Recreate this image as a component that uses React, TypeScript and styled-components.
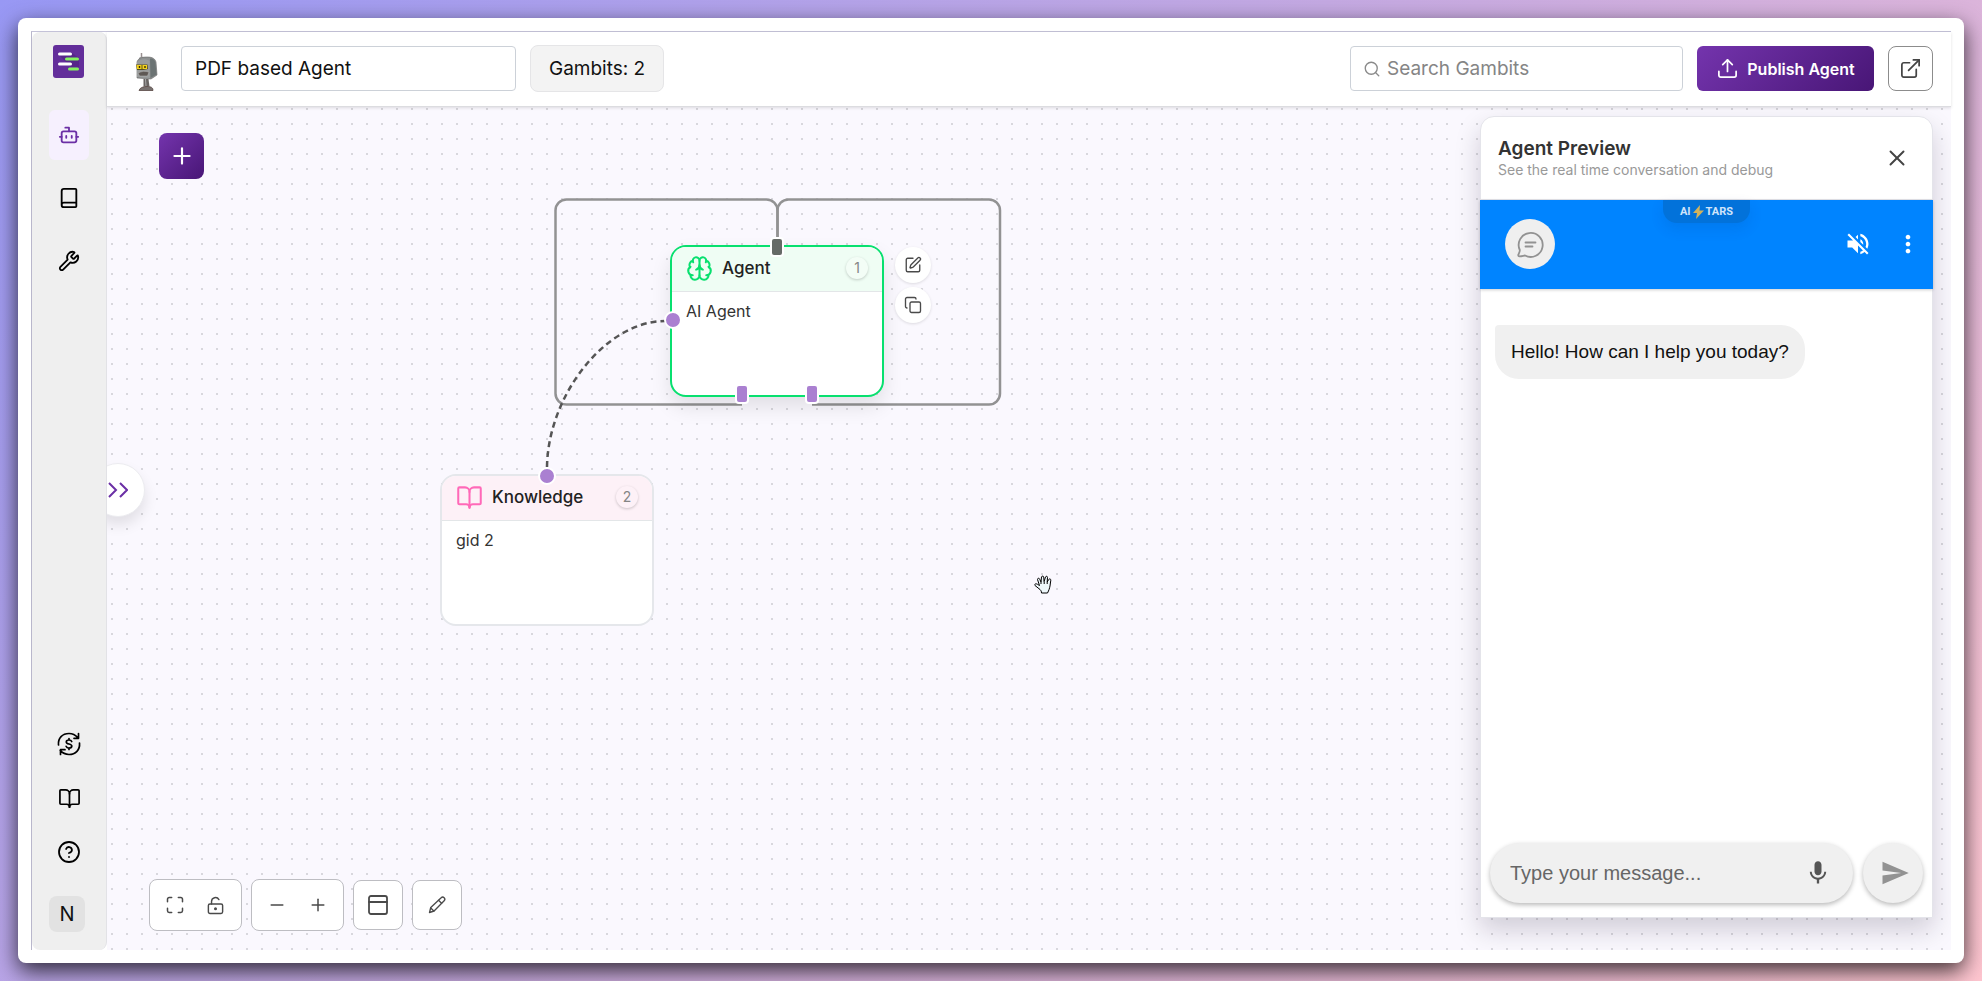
import React from "react";
import styled, { createGlobalStyle, css } from "styled-components";
import {
  Bot, Book, Wrench, BookOpen, CircleHelp, Brain, SquarePen, Copy, Upload, ExternalLink,
  Search, Plus, Minus, Maximize, LockKeyholeOpen, PanelTop, X,
} from "lucide-react";
import { MdMic, MdSend, MdVolumeOff, MdMoreVert } from "react-icons/md";

const sans = `Inter, "Open Sans", sans-serif`;
const arial = `"Liberation Sans", Arial, sans-serif`;

const GlobalStyle = createGlobalStyle`
  *, *::before, *::after { box-sizing: border-box; }
  body { margin: 0; font-family: ${sans}; color: #111; }
  button, input { font: inherit; color: inherit; margin: 0; }
  button { padding: 0; border: 0; background: none; cursor: pointer; }
  svg { display: block; flex: none; }
`;

const Desktop = styled.div`
  height: 100vh;
  min-height: 700px;
  padding: 18px;
  background: linear-gradient(135deg, #9898f4 0%, #c9abe0 50%, #ffc6d0 100%);
`;

const AppWindow = styled.div`
  height: 100%;
  padding: 13px;
  background: #fff;
  border-radius: 8px;
  box-shadow: 0 8px 22px rgba(0, 0, 0, 0.75);
`;

const Shell = styled.div`
  display: flex;
  height: 100%;
  border-top: 1px solid #c4c2d8;
  border-left: 1px solid #b9b7cc;
`;

const Sidebar = styled.nav`
  display: flex;
  flex-direction: column;
  align-items: flex-start;
  flex: none;
  width: 75px;
  padding: 13px 17px 18px;
  background: #efefef;
  border-right: 1px solid #e2e2e6;
  border-radius: 8px;
`;

const SideGroup = styled.div<{ $bottom?: boolean }>`
  display: flex;
  flex-direction: column;
  align-items: flex-start;
  gap: ${(p) => (p.$bottom ? "18px" : "13px")};
  margin-top: ${(p) => (p.$bottom ? "auto" : "32px")};
`;

const SideLink = styled.a<{ $active?: boolean; $short?: boolean }>`
  display: flex;
  align-items: center;
  justify-content: center;
  width: 40px;
  height: ${(p) => (p.$short ? "36px" : "50px")};
  border-radius: 6px;
  color: ${(p) => (p.$active ? "#6b2fa5" : "#000")};
  background: ${(p) => (p.$active ? "#f6f0fe" : "transparent")};
`;

const Avatar = styled.button`
  width: 36px;
  height: 36px;
  margin-top: 8px;
  border-radius: 8px;
  background: #e2e2e2;
  font-size: 20px;
  line-height: 36px;
`;

const Main = styled.main`
  display: flex;
  flex: 1;
  flex-direction: column;
  min-width: 0;
`;

const Header = styled.header`
  position: relative;
  z-index: 2;
  display: flex;
  align-items: center;
  flex: none;
  gap: 14px;
  height: 75px;
  padding: 0 18px 1px 16px;
  background: #fff;
  border-bottom: 1px solid #dcdce0;
  box-shadow: 0 1px 3px rgba(0, 0, 0, 0.12);
`;

const NameInput = styled.input`
  width: 335px;
  height: 45px;
  padding: 0 13px;
  border: 1px solid #ccd1d8;
  border-radius: 4px;
  background: #fff;
  font-size: 19px;
`;

const GambitCount = styled.div`
  height: 47px;
  padding: 0 18px;
  border: 1px solid #e5e5e7;
  border-radius: 8px;
  background: #f3f3f3;
  font-size: 19px;
  line-height: 45px;
  white-space: nowrap;
`;

const SearchBox = styled.label`
  display: flex;
  align-items: center;
  gap: 6px;
  width: 333px;
  height: 45px;
  margin-left: auto;
  padding: 0 12px;
  border: 1px solid #ccd1d8;
  border-radius: 4px;
  color: #8a8a8a;

  input {
    flex: 1;
    min-width: 0;
    padding: 0;
    border: 0;
    outline: 0;
    background: none;
    font-size: 19px;
    color: #111;
  }
  input::placeholder { color: #858585; opacity: 1; }
`;

const purple = css`
  background: linear-gradient(135deg, #7434ad 0%, #481676 100%);
  color: #fff;
`;

const PublishButton = styled.button`
  ${purple}
  display: flex;
  align-items: center;
  justify-content: center;
  gap: 8px;
  width: 177px;
  height: 45px;
  border-radius: 6px;
  font-size: 16px;
  font-weight: 600;
  white-space: nowrap;
`;

const OutlineButton = styled.button`
  display: flex;
  align-items: center;
  justify-content: center;
  width: 45px;
  height: 45px;
  border: 1px solid #8c8c8c;
  border-radius: 8px;
  color: #444;
`;

const Canvas = styled.section`
  position: relative;
  flex: 1;
  min-height: 0;
  overflow: hidden;
  background-color: #faf8fe;
  background-image: radial-gradient(circle at 8px 8px, #d8d7dd 1px, transparent 1px);
  background-size: 15px 15px;
  background-position: -3px -6px;
`;

const AddButton = styled.button`
  ${purple}
  position: absolute;
  top: 26px;
  left: 52px;
  display: flex;
  align-items: center;
  justify-content: center;
  width: 45px;
  height: 46px;
  border-radius: 8px;
`;

const DrawerToggle = styled.button`
  position: absolute;
  top: 356px;
  left: -16px;
  display: flex;
  align-items: center;
  justify-content: center;
  width: 54px;
  height: 54px;
  border: 1px solid #ececf0;
  border-radius: 50%;
  background: #fff;
  color: #6b2fa5;
  box-shadow: 0 8px 14px rgba(0, 0, 0, 0.1);
`;

const Edges = styled.svg`
  position: absolute;
  top: 0;
  left: 0;
  fill: none;
`;

const Node = styled.article<{ $x: number; $y: number; $accent: string; $lifted?: boolean }>`
  position: absolute;
  left: ${(p) => p.$x}px;
  top: ${(p) => p.$y}px;
  width: 214px;
  height: 152px;
  border: 2px solid ${(p) => p.$accent};
  border-radius: 16px;
  background: #fff;
  box-shadow: ${(p) => (p.$lifted ? "0 10px 20px rgba(0, 0, 0, 0.1)" : "none")};
`;

const NodeHead = styled.header<{ $tint: string; $color: string }>`
  display: flex;
  align-items: center;
  gap: 9px;
  height: 45px;
  padding: 0 14px 2px;
  border-bottom: 1px solid #e3e6e8;
  border-radius: 14px 14px 0 0;
  background: ${(p) => p.$tint};

  svg { color: ${(p) => p.$color}; }
  h3 { flex: 1; margin: 0; font-size: 17px; line-height: 24px; font-weight: 500; color: #222; }
`;

const NodeId = styled.span<{ $tint: string }>`
  width: 22px;
  height: 22px;
  border-radius: 50%;
  background: ${(p) => p.$tint};
  box-shadow: 0 1px 3px rgba(0, 0, 0, 0.2);
  color: #858585;
  font-size: 14px;
  line-height: 22px;
  text-align: center;
`;

const NodeText = styled.p`
  margin: 0;
  padding: 7px 14px;
  font-size: 16px;
  line-height: 24px;
  color: #333;
`;

const Port = styled.i<{ $x: number; $y: number; $round?: boolean; $dark?: boolean }>`
  position: absolute;
  left: ${(p) => p.$x}px;
  top: ${(p) => p.$y}px;
  width: ${(p) => (p.$round ? 18 : 14)}px;
  height: ${(p) => (p.$round ? 18 : 20)}px;
  border: 2px solid #fff;
  border-radius: ${(p) => (p.$round ? "50%" : "4px")};
  background: ${(p) => (p.$dark ? "#666a67" : "#aa80d1")};
`;

const NodeActions = styled.div`
  position: absolute;
  top: 140px;
  left: 788px;
  display: flex;
  flex-direction: column;
  gap: 4px;
`;

const RoundAction = styled.button`
  display: flex;
  align-items: center;
  justify-content: center;
  width: 36px;
  height: 36px;
  border-radius: 50%;
  background: #fff;
  color: #4a4a4a;
  box-shadow: 0 1px 3px rgba(0, 0, 0, 0.12);
`;

const HandCursor = styled.svg`
  position: absolute;
  left: 927px;
  top: 468px;
`;

const Controls = styled.div`
  position: absolute;
  left: 42px;
  bottom: 19px;
  display: flex;
  align-items: center;
  gap: 9px;
`;

const ControlGroup = styled.div<{ $single?: boolean }>`
  display: flex;
  height: ${(p) => (p.$single ? "50px" : "52px")};
  width: ${(p) => (p.$single ? "50px" : "93px")};
  padding: ${(p) => (p.$single ? "0" : "0 5px")};
  border: 1px solid #bdbdc2;
  border-radius: 8px;
  background: #fff;
  color: #4a4a4a;

  button {
    display: flex;
    flex: 1;
    align-items: center;
    justify-content: center;
  }
`;

const Preview = styled.aside`
  position: absolute;
  top: 9px;
  right: 18px;
  bottom: 32px;
  display: flex;
  flex-direction: column;
  width: 453px;
  border: 1px solid #e4e4ea;
  border-radius: 14px 14px 0 0;
  background: #fff;
  box-shadow: 0 12px 26px rgba(20, 10, 40, 0.18);
`;

const PreviewHead = styled.header`
  display: flex;
  align-items: center;
  justify-content: space-between;
  flex: none;
  height: 83px;
  padding: 0 22px 0 17px;
  border-bottom: 1px solid #e4e4ea;

  h2 { margin: 0; font-size: 19px; line-height: 24px; font-weight: 600; color: #333; }
  p { margin: 0; font-size: 14px; line-height: 18px; color: #999; }
  button { color: #444; }
`;

const ChatBar = styled.div`
  position: relative;
  display: flex;
  align-items: center;
  flex: none;
  height: 89px;
  margin: 0 -1px;
  padding: 0 11px 2px 25px;
  background: #0084ff;
  color: #fff;
  box-shadow: 0 1px 3px rgba(0, 0, 0, 0.2);
`;

const Brand = styled.div`
  position: absolute;
  top: 0;
  left: 183px;
  display: flex;
  align-items: center;
  justify-content: center;
  gap: 2px;
  width: 87px;
  height: 23px;
  border-radius: 0 0 14px 14px;
  background: #0272da;
  box-shadow: 0 6px 14px rgba(0, 50, 120, 0.12);
  color: #cfe4fa;
  font: 700 11px/23px Roboto, sans-serif;
`;

const ChatAvatar = styled.div`
  display: flex;
  align-items: center;
  justify-content: center;
  width: 50px;
  height: 50px;
  margin-right: auto;
  border-radius: 50%;
  background: #efefef;
`;

const BarButton = styled.button`
  margin-left: 22px;
  color: #fff;
`;

const Messages = styled.div`
  flex: 1;
  padding: 36px 14px;
  font-family: ${arial};
`;

const Bubble = styled.p`
  width: fit-content;
  margin: 0;
  padding: 15px 16px;
  border-radius: 4px 24px 24px 24px;
  background: #f0f0f0;
  font-size: 19px;
  line-height: 24px;
`;

const Composer = styled.form`
  display: flex;
  gap: 10px;
  padding: 0 9px 14px;
  font-family: ${arial};
`;

const raised = css`
  height: 60px;
  border-radius: 30px;
  background: #f0f0f0;
  box-shadow: 0 2px 5px rgba(0, 0, 0, 0.28);
`;

const MessageBox = styled.div`
  ${raised}
  display: flex;
  align-items: center;
  flex: 1;
  padding: 0 21px 0 20px;
  color: #555;

  input {
    flex: 1;
    min-width: 0;
    padding: 0;
    border: 0;
    outline: 0;
    background: none;
    font-size: 20px;
  }
  input::placeholder { color: #666; opacity: 1; }
`;

const SendButton = styled.button`
  ${raised}
  display: flex;
  align-items: center;
  justify-content: center;
  width: 60px;
  padding-left: 4px;
  color: #929292;
`;

const Logo = styled.a`
  margin-left: 4px;
`;

const LogoMark = () => (
  <svg width="31" height="33" viewBox="0 0 31 33" aria-hidden="true">
    <rect width="31" height="33" rx="3" fill="#632e9a" />
    <path d="M7 11 18 22H26V13L19 8z" fill="#4e2380" opacity=".6" />
    <g strokeWidth="3" strokeLinecap="round">
      <path d="M6.500 9h11M6.500 19h11" stroke="#fff" />
      <path d="M13.500 14h11M16.500 24h8" stroke="#85f360" />
    </g>
  </svg>
);

const Robot = () => (
  <svg width="44" height="44" viewBox="-2 -4 44 44" aria-label="Agent avatar">
    <path d="M16.500 7.500V2" stroke="#9a9090" strokeWidth="1.500" />
    <ellipse cx="17" cy="7.500" rx="3" ry="1.800" fill="#a6a6a6" />
    <path d="M12 11c1-3.500 4-5 10-5 6 0 8 2 9 5l1 13-6 4-14-1z" fill="#8d9090" stroke="#666" strokeWidth=".6" />
    <path d="M25 7.500c4 0 5 2 5.500 5l1 11-6 3.500z" fill="#6b7373" />
    <path d="M12 11c3-3.500 10-3.500 12.500-1l.5 17-13-1z" fill="#999c9c" />
    <path d="M11 13.500h11.500l.5 4.500-4.500 1H12z" fill="#5a5020" />
    <path d="M11.500 14h5v4h-4.500zM17.500 14h4.500v4h-4.500z" fill="#f3d31c" />
    <path d="M14.500 15v2M20 15v2" stroke="#3a2b00" strokeWidth="1.400" />
    <path d="M13 22c4-2 7-2 11-1l-1.500 4h-8z" fill="#5e5854" stroke="#bababa" strokeWidth=".5" />
    <path d="M18.500 28h5l1 7.500h-6z" fill="#686462" />
    <path d="M20.500 28l.5 7" stroke="#aaa" />
    <path d="M14 39.500c1-3 4-4 8-4s6 1 6 4z" fill="#77716f" stroke="#4c3a35" strokeWidth=".7" />
  </svg>
);

const CreditsIcon = () => (
  <svg width="24" height="24" viewBox="0 0 24 24" fill="none" stroke="currentColor" strokeWidth="1.700" strokeLinecap="round" strokeLinejoin="round">
    <path d="M1.500 13C.8 6 5.500 1.500 12 1.500c3.500 0 6.500 1.500 8.800 4.100M21.500 1.500v4.800h-4.500" />
    <path d="M22.500 11C23.200 18 18.500 22.500 12 22.500c-3.500 0-6.500-1.500-8.800-4.100M3.500 22.500v-4.800H8" />
    <path d="M14.700 9.500C14.300 8.400 13.300 8 12 8c-1.600 0-2.700.7-2.700 1.900 0 2.800 5.500 1.300 5.500 4.200 0 1.300-1.200 2-2.800 2-1.500 0-2.500-.7-2.900-1.800M12 6.500V8M12 16v1.500" />
  </svg>
);

const ChatIcon = () => (
  <svg width="28" height="28" viewBox="0 0 28 28" fill="none" stroke="#929292" strokeWidth="1.800" strokeLinecap="round" strokeLinejoin="round">
    <path d="M3.800 20A12 12 0 1 1 9 25.500c-1.600.2-3.200.8-5.400.8-1.300 0-1.500-.9-1.200-1.600.6-1.600 1.600-3 1.400-4.700z" />
    <path d="M9.500 12.500h10M9.500 16.500h7" />
  </svg>
);

const Bolt = () => (
  <svg width="11" height="14" viewBox="0 0 11 14" aria-hidden="true">
    <path d="M7 0 0 8h4L3 14l8-8.500H6.500z" fill="#d2b25c" />
  </svg>
);

const PencilIcon = () => (
  <svg width="20" height="20" viewBox="0 0 24 24" fill="none" stroke="currentColor" strokeWidth="1.600" strokeLinecap="round" strokeLinejoin="round">
    <path d="M3 21l1.500-6L17 3.300a2.500 2.500 0 0 1 3.600 3.500L8.500 19.200z" />
    <path d="M4.500 15.500l3.700 3.600M13.800 6.400l3.700 3.600" />
  </svg>
);

export default function App() {
  return (
    <>
      <GlobalStyle />
      <Desktop>
        <AppWindow>
          <Shell>
            <Sidebar aria-label="Main">
              <Logo href="#home" aria-label="Home"><LogoMark /></Logo>
              <SideGroup>
                <SideLink href="#agents" aria-label="Agents" $active><Bot size={22} /></SideLink>
                <SideLink href="#library" aria-label="Library"><Book size={22} /></SideLink>
                <SideLink href="#tools" aria-label="Tools"><Wrench size={22} /></SideLink>
              </SideGroup>
              <SideGroup $bottom>
                <SideLink href="#credits" aria-label="Credits" $short><CreditsIcon /></SideLink>
                <SideLink href="#docs" aria-label="Docs" $short><BookOpen size={23} strokeWidth={1.8} /></SideLink>
                <SideLink href="#help" aria-label="Help" $short><CircleHelp size={24} strokeWidth={1.8} /></SideLink>
                <Avatar aria-label="Account">N</Avatar>
              </SideGroup>
            </Sidebar>

            <Main>
              <Header>
                <Robot />
                <NameInput aria-label="Agent name" defaultValue="PDF based Agent" />
                <GambitCount>Gambits: 2</GambitCount>
                <SearchBox>
                  <Search size={18} strokeWidth={1.8} />
                  <input aria-label="Search Gambits" placeholder="Search Gambits" />
                </SearchBox>
                <PublishButton><Upload size={23} strokeWidth={1.8} />Publish Agent</PublishButton>
                <OutlineButton aria-label="Open in new tab"><ExternalLink size={23} strokeWidth={1.8} /></OutlineButton>
              </Header>

              <Canvas>
                <Edges width="1200" height="700">
                  <g stroke="#929293" strokeWidth="2.500">
                    <path d="M635 297.500H459.500A11 11 0 0 1 448.500 286.500V103.500A11 11 0 0 1 459.500 92.500H659.500A11 11 0 0 1 670.500 103.500V132" />
                    <path d="M705 297.500H882A11 11 0 0 0 893 286.500V103.500A11 11 0 0 0 882 92.500H681.500A11 11 0 0 0 670.500 103.500V132" />
                  </g>
                  <path d="M440 360C441 288 499 214 558 214" stroke="#555" strokeWidth="2.500" strokeDasharray="6 4" />
                </Edges>

                <AddButton aria-label="Add gambit"><Plus size={26} strokeWidth={2} /></AddButton>
                <DrawerToggle aria-label="Expand panel">
                  <svg width="20" height="16" viewBox="0 0 20 16" fill="none" stroke="currentColor" strokeWidth="2">
                    <path d="M1 1l7 7-7 7M12 1l7 7-7 7" />
                  </svg>
                </DrawerToggle>

                <Node $x={563} $y={138} $accent="#08e06f" $lifted>
                  <NodeHead $tint="#effdf4" $color="#08e06f">
                    <Brain size={27} strokeWidth={1.8} /><h3>Agent</h3><NodeId $tint="#f3fdf6">1</NodeId>
                  </NodeHead>
                  <NodeText>AI Agent</NodeText>
                  <Port $x={98} $y={-10} $dark />
                  <Port $x={-8} $y={64} $round />
                  <Port $x={63} $y={137} />
                  <Port $x={133} $y={137} />
                </Node>
                <NodeActions>
                  <RoundAction aria-label="Edit"><SquarePen size={18} strokeWidth={1.8} /></RoundAction>
                  <RoundAction aria-label="Copy"><Copy size={18} strokeWidth={1.8} /></RoundAction>
                </NodeActions>

                <Node $x={333} $y={367} $accent="#e5e7eb">
                  <NodeHead $tint="#fdf1f7" $color="#ff69b8">
                    <BookOpen size={27} strokeWidth={1.8} /><h3>Knowledge</h3><NodeId $tint="#fdf1f7">2</NodeId>
                  </NodeHead>
                  <NodeText>gid 2</NodeText>
                  <Port $x={96} $y={-9} $round />
                </Node>

                <HandCursor width="19" height="19" viewBox="0 0 19 19" aria-hidden="true">
                  <path d="M6 14.500 1 10.500C0 9 2 8.300 3.500 9.300l2 1.200-2-6c0-1.600 1.800-1.600 2.200-.3L7 7 7.500 2c.3-1.300 2-1.100 2.200 0l.4 4.500L11.500 2c.5-1.200 2.100-.8 2 .4L13.200 7l1.500-2.500c.8-1.100 2.300-.5 2.100.7L16 11c-.5 2.500-1 4-2.500 7h-6c0-1.500-.5-2.500-1.500-3.500z" fill="#eef8fb" stroke="#000" strokeLinejoin="round" />
                  <path d="M7 7v2M10.200 6.500v2.500M13.200 7v2" stroke="#000" />
                </HandCursor>

                <Controls>
                  <ControlGroup>
                    <button aria-label="Fit view"><Maximize size={20} strokeWidth={1.8} /></button>
                    <button aria-label="Toggle lock"><LockKeyholeOpen size={19} strokeWidth={1.8} /></button>
                  </ControlGroup>
                  <ControlGroup>
                    <button aria-label="Zoom out"><Minus size={20} strokeWidth={1.8} /></button>
                    <button aria-label="Zoom in"><Plus size={20} strokeWidth={1.8} /></button>
                  </ControlGroup>
                  <ControlGroup $single><button aria-label="Layout"><PanelTop size={24} strokeWidth={1.8} /></button></ControlGroup>
                  <ControlGroup $single><button aria-label="Annotate"><PencilIcon /></button></ControlGroup>
                </Controls>

                <Preview>
                  <PreviewHead>
                    <div>
                      <h2>Agent Preview</h2>
                      <p>See the real time conversation and debug</p>
                    </div>
                    <button aria-label="Close preview"><X size={26} strokeWidth={1.8} /></button>
                  </PreviewHead>
                  <ChatBar>
                    <Brand>AI<Bolt />TARS</Brand>
                    <ChatAvatar><ChatIcon /></ChatAvatar>
                    <BarButton aria-label="Unmute"><MdVolumeOff size={28} /></BarButton>
                    <BarButton aria-label="More options"><MdMoreVert size={28} /></BarButton>
                  </ChatBar>
                  <Messages><Bubble>Hello! How can I help you today?</Bubble></Messages>
                  <Composer onSubmit={(e) => e.preventDefault()}>
                    <MessageBox>
                      <input aria-label="Message" placeholder="Type your message..." />
                      <button type="button" aria-label="Dictate"><MdMic size={28} /></button>
                    </MessageBox>
                    <SendButton aria-label="Send"><MdSend size={30} /></SendButton>
                  </Composer>
                </Preview>
              </Canvas>
            </Main>
          </Shell>
        </AppWindow>
      </Desktop>
    </>
  );
}
